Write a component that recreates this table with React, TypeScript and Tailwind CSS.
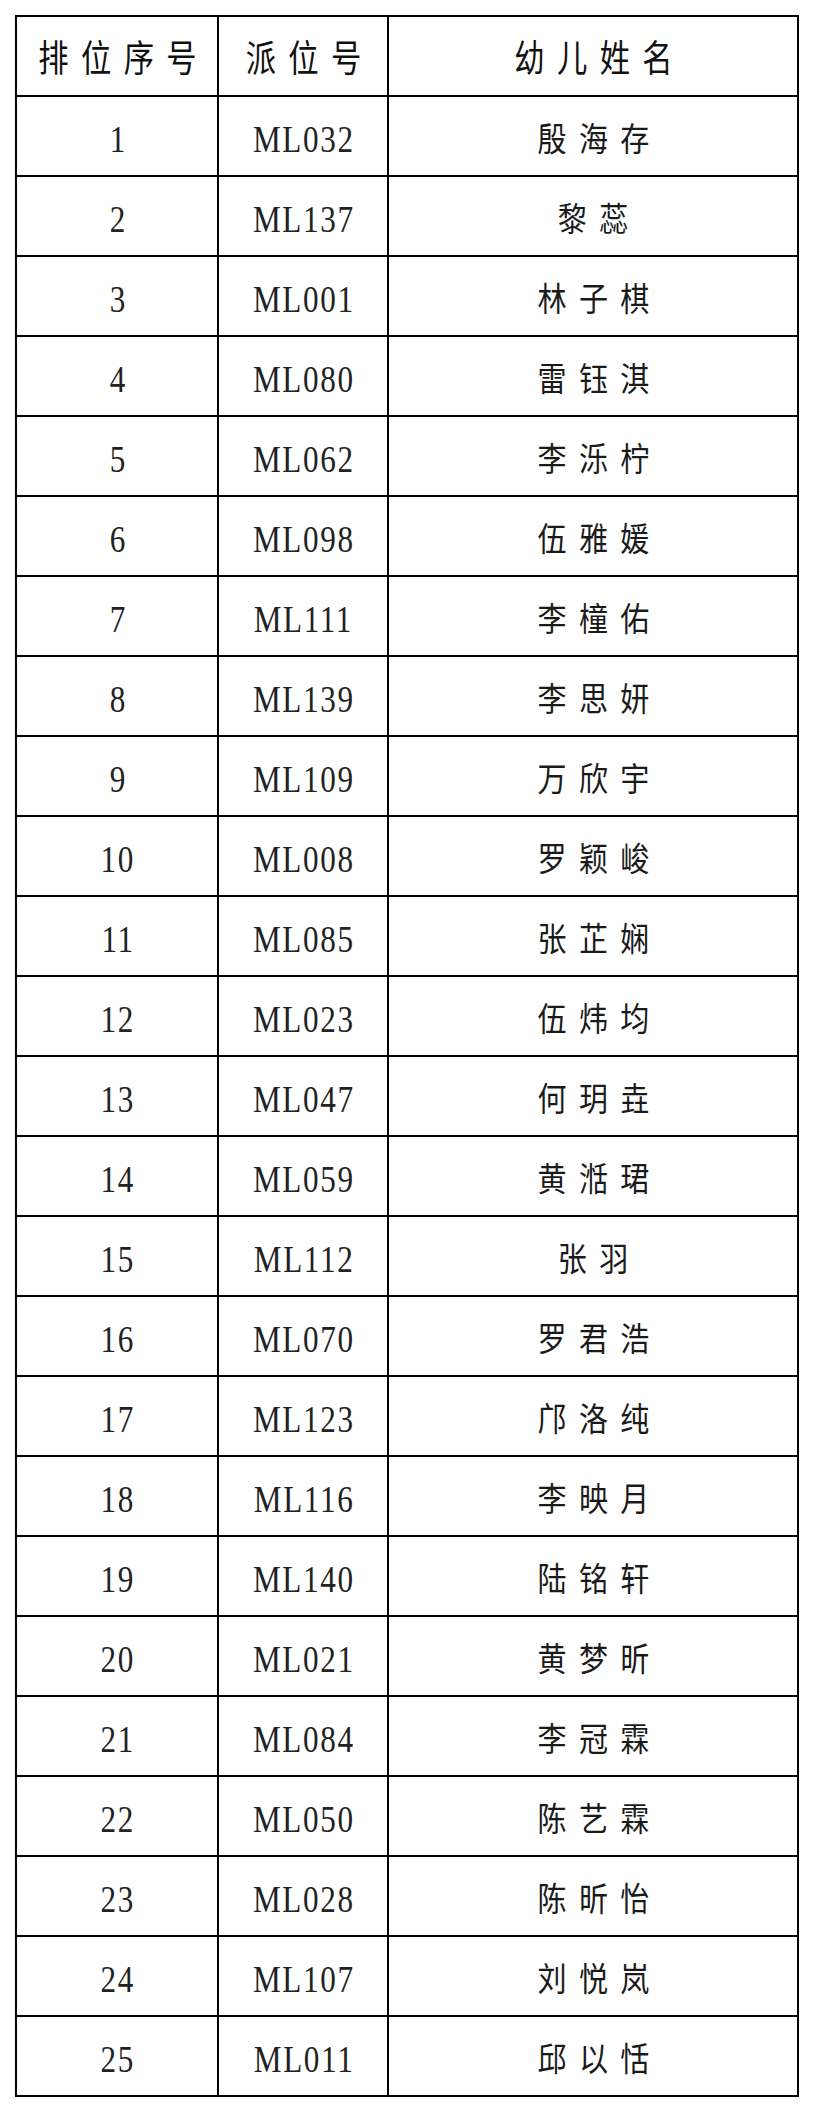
import React from "react";

type Row = { rank: number; code: string; name: string };

const rows: Row[] = [
  { rank: 1, code: "ML032", name: "殷海存" },
  { rank: 2, code: "ML137", name: "黎蕊" },
  { rank: 3, code: "ML001", name: "林子棋" },
  { rank: 4, code: "ML080", name: "雷钰淇" },
  { rank: 5, code: "ML062", name: "李泺柠" },
  { rank: 6, code: "ML098", name: "伍雅媛" },
  { rank: 7, code: "ML111", name: "李橦佑" },
  { rank: 8, code: "ML139", name: "李思妍" },
  { rank: 9, code: "ML109", name: "万欣宇" },
  { rank: 10, code: "ML008", name: "罗颖峻" },
  { rank: 11, code: "ML085", name: "张芷娴" },
  { rank: 12, code: "ML023", name: "伍炜均" },
  { rank: 13, code: "ML047", name: "何玥垚" },
  { rank: 14, code: "ML059", name: "黄湉珺" },
  { rank: 15, code: "ML112", name: "张羽" },
  { rank: 16, code: "ML070", name: "罗君浩" },
  { rank: 17, code: "ML123", name: "邝洛纯" },
  { rank: 18, code: "ML116", name: "李映月" },
  { rank: 19, code: "ML140", name: "陆铭轩" },
  { rank: 20, code: "ML021", name: "黄梦昕" },
  { rank: 21, code: "ML084", name: "李冠霖" },
  { rank: 22, code: "ML050", name: "陈艺霖" },
  { rank: 23, code: "ML028", name: "陈昕怡" },
  { rank: 24, code: "ML107", name: "刘悦岚" },
  { rank: 25, code: "ML011", name: "邱以恬" },
];

const cjk = "font-['Noto_Sans_CJK_SC',sans-serif]";
const latin = "font-['Liberation_Serif',serif]";

// one cell of the grid; right + bottom borders, the outer box draws left/top
const Cell = ({ children }: { children: React.ReactNode }) => (
  <div className="h-[80px] min-w-0 border-r-2 border-b-2 border-black flex items-center justify-center">
    {children}
  </div>
);

const Head = ({ text }: { text: string }) => (
  <span
    className={`${cjk} inline-block shrink-0 whitespace-nowrap text-[37px] leading-none tracking-[15px] pl-[15px] scale-x-[0.82] text-[#111]`}
  >
    {text}
  </span>
);

const Latin = ({ text }: { text: string }) => (
  <span
    className={`${latin} inline-block shrink-0 whitespace-nowrap text-[38px] leading-none tracking-[2px] pl-[2px] pt-[6px] scale-x-[0.82] text-[#222]`}
  >
    {text}
  </span>
);

const Name = ({ text }: { text: string }) => (
  <span
    className={`${cjk} inline-block shrink-0 whitespace-nowrap text-[33px] leading-none tracking-[14px] pl-[14px] pt-[2px] scale-x-[0.88] text-[#1a1a1a]`}
  >
    {text}
  </span>
);

export default function App() {
  return (
    <div className="w-[814px] min-h-[2112px] bg-white pt-[15px] pl-[15px]">
      <div className="w-[784px] border-l-2 border-t-2 border-black grid grid-cols-[202px_170px_410px]">
        <Cell>
          <Head text="排位序号" />
        </Cell>
        <Cell>
          <Head text="派位号" />
        </Cell>
        <Cell>
          <Head text="幼儿姓名" />
        </Cell>

        {rows.map((r) => (
          <React.Fragment key={r.rank}>
            <Cell>
              <Latin text={String(r.rank)} />
            </Cell>
            <Cell>
              <Latin text={r.code} />
            </Cell>
            <Cell>
              <Name text={r.name} />
            </Cell>
          </React.Fragment>
        ))}
      </div>
    </div>
  );
}
